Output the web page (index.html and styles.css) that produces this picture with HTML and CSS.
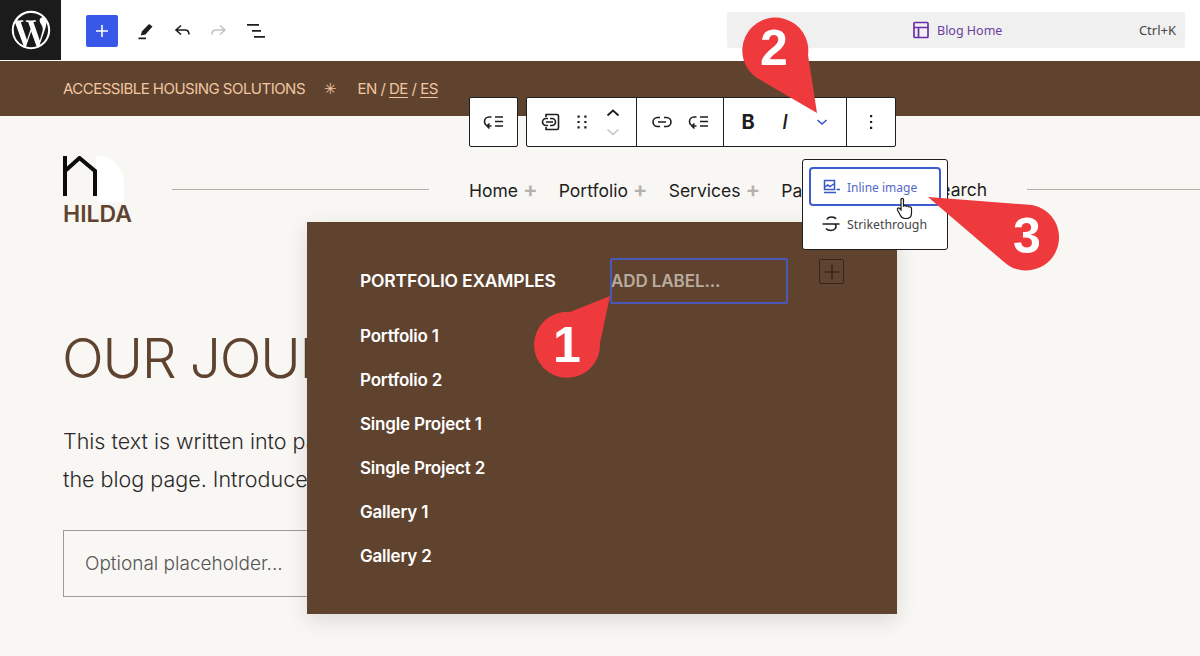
FILE: index.html
```html
<!DOCTYPE html>
<html lang="en">
<head>
  <meta charset="UTF-8">
  <title>Hilda - Block Editor</title>
  <link rel="stylesheet" href="styles.css">
</head>
<body>
  <!-- editor top bar -->
  <header class="topbar">
    <div class="wp-logo">
      <svg width="44" height="44" viewBox="0 0 24 24"><path fill="#fff" d="M12 1.500a10.500 10.500 0 1 0 0 21 10.500 10.500 0 0 0 0-21zM2.600 12c0-1.400.3-2.700.8-3.800l4.500 12.300A9.400 9.400 0 0 1 2.600 12zM12 21.400c-.9 0-1.800-.1-2.700-.4l2.800-8.200 2.900 8c0 .1 0 .1.100.1-1 .3-2 .5-3.100.5zM13.300 7.600c.6 0 1.100-.1 1.100-.1.500 0 .5-.8 0-.8 0 0-1.500.1-2.500.1-.9 0-2.400-.1-2.400-.1-.5 0-.6.800-.1.800 0 0 .5.100 1 .1l1.400 3.900-2 6-3.400-9.900c.6 0 1.100-.1 1.100-.1.500 0 .5-.8 0-.8 0 0-1.500.1-2.500.1h-.6A9.400 9.400 0 0 1 18.400 5.100h-.1c-.9 0-1.600.8-1.600 1.700 0 .8.400 1.400.9 2.200.4.600.8 1.400.8 2.600 0 .8-.3 1.700-.7 3l-.9 3.100zM16.700 20.100l2.900-8.300c.5-1.300.7-2.400.7-3.300 0-.3 0-.6-.1-.9a9.400 9.400 0 0 1-3.500 12.500z"/></svg>
    </div>
    <div class="tools">
      <button class="add-btn">
        <svg width="24" height="24" viewBox="0 0 24 24"><path fill="#fff" d="M11.200 6h1.600v5.200H18v1.600h-5.200V18h-1.600v-5.200H6v-1.600h5.200z"/></svg>
      </button>
      <svg class="tool tool-pen" width="24" height="24" viewBox="0 0 24 24"><path fill="#1e1e1e" d="M16 5l3.500 2.500-7 8-4.800 1 1.300-4.200zM5.500 18.600h7.500v1.700H5.500z"/></svg>
      <svg class="tool" width="24" height="24" viewBox="0 0 24 24"><path fill="none" stroke="#1e1e1e" stroke-width="1.600" d="M11 6.500L6 11l5 4.500M6 11h9c2.500 0 4 1.700 4 4.500"/></svg>
      <svg class="tool" width="24" height="24" viewBox="0 0 24 24"><path fill="none" stroke="#c4c4c4" stroke-width="1.600" d="M13 6.500l5 4.500-5 4.500M18 11H9c-2.500 0-4 1.700-4 4.500"/></svg>
      <svg class="tool" width="24" height="24" viewBox="0 0 24 24"><path fill="#1e1e1e" d="M3 5h12v1.800H3zM8 11h9v1.800H8zM10 17h11v1.800H10z"/></svg>
    </div>
    <div class="command-bar">
      <div class="doc-title">
        <svg width="20" height="20" viewBox="0 0 20 20"><path fill="none" stroke="#6a2fa8" stroke-width="1.700" d="M3 3.500a1 1 0 0 1 1-1h12a1 1 0 0 1 1 1v13a1 1 0 0 1-1 1H4a1 1 0 0 1-1-1zM3 7.500h14M7.500 7.500v10"/></svg>
        <span>Blog Home</span>
      </div>
      <span class="shortcut">Ctrl+K</span>
    </div>
  </header>

  <main class="canvas">
    <div class="announce">
      <span class="tagline">ACCESSIBLE HOUSING SOLUTIONS</span>
      <span class="star">✳</span>
      <span class="langs">EN / <u>DE</u> / <u>ES</u></span>
    </div>

    <div class="site-header">
      <div class="site-logo">
        <svg class="house" width="62" height="46" viewBox="0 0 62 46">
          <path fill="#fff" d="M34 0h7C52 2 62 14 62 28v18H35z"/>
          <path fill="none" stroke="#0c0c0c" stroke-width="4" d="M3 0v40M3 15L17.500 2 33 15v25"/>
        </svg>
        <strong>HILDA</strong>
      </div>
      <span class="rule rule-left"></span>
      <nav class="site-nav">
        <a>Home <i>+</i></a>
        <a>Portfolio <i>+</i></a>
        <a>Services <i>+</i></a>
        <a class="nav-pages">Pages <i>+</i></a>
        <a>Search</a>
      </nav>
      <span class="rule rule-right"></span>
    </div>

    <section class="hero">
      <h1>OUR JOURNAL</h1>
      <p>This text is written into pattern and can be changed on<br>the blog page. Introduce your readers here.</p>
      <div class="search-field">Optional placeholder...</div>
    </section>
  </main>

  <!-- mega menu panel opened from the nav -->
  <div class="mega-menu">
    <div class="mega-head">
      <strong>PORTFOLIO EXAMPLES</strong>
      <span class="label-input">ADD LABEL...</span>
      <span class="mini-add">
        <svg width="20" height="20" viewBox="0 0 24 24"><path fill="#241a12" d="M11.300 3h1.400v8.300H21v1.400h-8.300V21h-1.400v-8.300H3v-1.400h8.300z"/></svg>
      </span>
    </div>
    <ul>
      <li>Portfolio 1</li>
      <li>Portfolio 2</li>
      <li>Single Project 1</li>
      <li>Single Project 2</li>
      <li>Gallery 1</li>
      <li>Gallery 2</li>
    </ul>
  </div>

  <!-- floating block toolbar -->
  <div class="block-toolbar">
    <div class="tb-group tb-single">
      <svg width="24" height="24" viewBox="0 0 24 24"><path fill="none" stroke="#1e1e1e" stroke-width="1.600" d="M9.500 7H7a4.500 4.500 0 0 0 0 9h2.500M7.500 13.500L5 16l2.500 2.500M13 7h8M13 11.500h8M13 16h8"/></svg>
    </div>
    <div class="tb-group tb-main">
      <div class="tb-section tb-move">
        <svg width="24" height="24" viewBox="0 0 24 24"><path fill="none" stroke="#1e1e1e" stroke-width="1.600" d="M7 7V4.500h11a1.500 1.500 0 0 1 1.500 1.500v12a1.500 1.500 0 0 1-1.500 1.500H7V17M9 8.500H7a3.500 3.500 0 0 0 0 7h2M11 8.500h2a3.500 3.500 0 0 1 0 7h-2M7 12h7"/></svg>
        <svg width="24" height="24" viewBox="0 0 24 24"><path fill="#1e1e1e" d="M7.500 5.500h2.200v2.200H7.500zM14.300 5.500h2.200v2.200h-2.200zM7.500 10.900h2.200v2.200H7.500zM14.300 10.900h2.200v2.200h-2.200zM7.500 16.300h2.200v2.200H7.500zM14.300 16.300h2.200v2.200h-2.200z"/></svg>
        <div class="movers">
          <svg width="20" height="16" viewBox="0 0 20 16"><path fill="none" stroke="#1e1e1e" stroke-width="1.800" d="M4.500 10.500L10 5.500l5.500 5"/></svg>
          <svg width="20" height="16" viewBox="0 0 20 16"><path fill="none" stroke="#c4c4c4" stroke-width="1.500" d="M4.500 5.500l5.500 5 5.500-5"/></svg>
        </div>
      </div>
      <div class="tb-section tb-links">
        <svg width="24" height="24" viewBox="0 0 24 24"><path fill="none" stroke="#1e1e1e" stroke-width="1.600" d="M10 7.500H7.500a4.500 4.500 0 0 0 0 9H10M14 7.500h2.500a4.500 4.500 0 0 1 0 9H14M8 12h8"/></svg>
        <svg width="24" height="24" viewBox="0 0 24 24"><path fill="none" stroke="#1e1e1e" stroke-width="1.600" d="M9.500 7H7a4.500 4.500 0 0 0 0 9h2.500M7.500 13.500L5 16l2.500 2.500M13 7h8M13 11.500h8M13 16h8"/></svg>
      </div>
      <div class="tb-section tb-format">
        <span class="fmt-b">B</span>
        <span class="fmt-i">I</span>
        <svg width="24" height="24" viewBox="0 0 24 24"><path fill="none" stroke="#3858c9" stroke-width="1.600" d="M7.500 10l4.500 4 4.500-4"/></svg>
      </div>
      <div class="tb-section tb-more">
        <svg width="24" height="24" viewBox="0 0 24 24"><path fill="#1e1e1e" d="M11 5h2.200v2.200H11zM11 10.900h2.200v2.200H11zM11 16.800h2.200V19H11z"/></svg>
      </div>
    </div>
  </div>

  <!-- format dropdown -->
  <div class="format-menu">
    <div class="format-item format-active">
      <svg width="20" height="20" viewBox="0 0 20 20"><path fill="none" stroke="#3858c9" stroke-width="1.500" d="M2.500 2.500h10v9h-10zM2.500 9.500l3-2.500 2.500 1.500 4.500-3M2 14.500h12M14.500 11.500H18"/></svg>
      <span>Inline image</span>
    </div>
    <div class="format-item">
      <svg width="20" height="20" viewBox="0 0 20 20"><path fill="none" stroke="#1e1e1e" stroke-width="1.500" d="M15 5c-1-2.500-8-3-9 .5M1.500 10h17M14 10c2.500 3 0 6.500-4 6.500-2 0-4-.7-5-2"/></svg>
      <span>Strikethrough</span>
    </div>
  </div>

  <!-- hand cursor -->
  <svg class="cursor" width="18" height="24" viewBox="0 0 18 24"><path fill="#fff" stroke="#1a1a1a" stroke-width="1.200" d="M5 2.500c0-1.500 2.500-1.500 2.500 0V9c1-.8 2.300-.5 2.800.3 1-.6 2.200-.3 2.700.6 1-.4 2.500.2 2.500 1.600v4.500c0 3-1.500 5.500-5 5.500H9c-2 0-3.500-1-4.500-3L1.500 13c-.7-1.500 1-2.700 2.200-1.500L5 13z"/></svg>

  <!-- numbered callout pins -->
  <svg class="callouts" width="1200" height="656" viewBox="0 0 1200 656">
    <path class="pin" d="M610 296L570 312A33 33 0 1 0 600 343z"/>
    <path class="pin" d="M817 113L757 78A33 33 0 1 1 808 55z"/>
    <path class="pin" d="M928 197L1032 205A33 33 0 1 1 1004 262z"/>
    <text x="567" y="362">1</text>
    <text x="774" y="65">2</text>
    <text x="1027" y="253">3</text>
  </svg>
</body>
</html>
```

FILE: styles.css
```css
* {
  box-sizing: border-box;
}

html, body {
  height: 656px;
  overflow: hidden;
}

body {
  margin: 0;
  position: relative;
  background-color: #f9f7f4;
  font-family: Inter, "Liberation Sans", sans-serif;
  color: #5f432f;
}

.topbar {
  height: 61px;
  background-color: #fff;
  display: flex;
  align-items: center;
}

.wp-logo {
  width: 61px;
  height: 60px;
  background-color: #1b1b1b;
  display: flex;
  align-items: center;
  justify-content: center;
  align-self: flex-start;
}

.tools {
  display: flex;
  align-items: center;
  margin-left: 25px;
}

.add-btn {
  width: 32px;
  height: 32px;
  padding: 0;
  border: none;
  border-radius: 2px;
  background-color: #3858e9;
  display: flex;
  align-items: center;
  justify-content: center;
}

.tool {
  margin-left: 13px;
}

.tool-pen {
  margin-left: 15px;
}

.command-bar {
  width: 458px;
  height: 36px;
  margin-left: auto;
  margin-right: 15px;
  margin-top: -1px;
  padding: 0 9px 0 11px;
  background-color: #f0f0f0;
  border-radius: 3px;
  display: flex;
  align-items: center;
  justify-content: space-between;
}

.doc-title {
  margin-left: 173px;
  display: flex;
  align-items: center;
  gap: 6px;
  font-family: "Noto Sans", sans-serif;
  font-size: 12.5px;
  color: #6a3ea1;
}

.shortcut {
  font-family: "Noto Sans", sans-serif;
  font-size: 13px;
  color: #444;
}

.announce {
  height: 55px;
  background-color: #5f432f;
  padding-left: 63px;
  display: flex;
  align-items: center;
  color: #f2c6a0;
  font-size: 15px;
  letter-spacing: -0.52px;
}

.star {
  margin-left: 19px;
  font-size: 15px;
}

.langs {
  margin-left: 21px;
}

.langs u {
  text-underline-offset: 3px;
}

.site-header {
  height: 120px;
  display: flex;
  align-items: flex-start;
  padding-top: 40px;
  padding-left: 62px;
}

.site-logo {
  width: 110px;
  display: flex;
  flex-direction: column;
}

.house {
  display: block;
}

.site-logo strong {
  font-size: 23px;
  font-weight: 600;
  line-height: 24px;
  padding-left: 1px;
  white-space: nowrap;
}

.rule {
  height: 1px;
  background-color: #b5b1aa;
  margin-top: 33px;
}

.rule-left {
  width: 257px;
}

.rule-right {
  flex: 1;
}

.site-nav {
  display: flex;
  gap: 21px;
  margin: 22px 40px 0;
  font-size: 17.5px;
  line-height: 24px;
  color: #1e1e1e;
  white-space: nowrap;
}

.site-nav i {
  font-style: normal;
  font-size: 22px;
  font-weight: 600;
  line-height: 22px;
  color: #b5b1aa;
}

/* the rest of this item sits behind the format dropdown */
.nav-pages {
  margin-right: 56px;
}

.hero {
  padding-left: 63px;
}

.hero h1 {
  margin: 88px 0 0 -1px;
  font-size: 55px;
  font-weight: 300;
  line-height: 68px;
  letter-spacing: -1.2px;
}

.hero p {
  margin: 30px 0 0;
  font-size: 21.5px;
  font-weight: 300;
  line-height: 38px;
  color: #2a2a2a;
  white-space: nowrap;
}

.search-field {
  width: 300px;
  height: 67px;
  margin-top: 32px;
  padding-left: 21px;
  border: 1px solid #9a9a96;
  display: flex;
  align-items: center;
  font-size: 19px;
  font-weight: 300;
  color: #555;
}

.mega-menu {
  position: absolute;
  left: 307px;
  top: 222px;
  width: 590px;
  height: 392px;
  padding: 36px 40px 36px 53px;
  background-color: #5f432f;
  box-shadow: 0 6px 20px rgba(0, 0, 0, 0.12);
  color: #fff;
}

.mega-head {
  display: flex;
  align-items: flex-start;
}

.mega-head strong {
  width: 250px;
  margin-top: 12px;
  font-size: 17.5px;
  font-weight: 600;
  letter-spacing: -0.2px;
  white-space: nowrap;
}

.label-input {
  width: 178px;
  height: 46px;
  border: 2px solid #4a58b8;
  border-radius: 2px;
  text-indent: -1px;
  display: flex;
  align-items: center;
  font-size: 17px;
  font-weight: 600;
  color: #b9ab9f;
  letter-spacing: -0.1px;
}

.mini-add {
  width: 25px;
  height: 25px;
  margin: 1px 0 0 31px;
  border: 1px solid #33241a;
  border-radius: 2px;
  display: flex;
  align-items: center;
  justify-content: center;
}

.mega-menu ul {
  list-style: none;
  margin: 20px 0 0;
  padding: 0;
  display: flex;
  flex-direction: column;
  gap: 20px;
}

.mega-menu li {
  font-size: 17px;
  font-weight: 600;
  line-height: 24px;
  letter-spacing: -0.2px;
}

.block-toolbar {
  position: absolute;
  left: 469px;
  top: 97px;
  display: flex;
  gap: 8px;
}

.tb-group {
  height: 50px;
  background-color: #fff;
  border: 1px solid #1e1e1e;
  border-radius: 2px;
  display: flex;
}

.tb-single {
  width: 49px;
  align-items: center;
  justify-content: center;
}

.tb-section {
  display: flex;
  align-items: center;
  justify-content: center;
  border-left: 1px solid #1e1e1e;
}

.tb-section:first-child {
  border-left: none;
}

.tb-move {
  width: 109px;
  gap: 7px;
}

.movers {
  display: flex;
  flex-direction: column;
  width: 24px;
  align-items: center;
  gap: 3px;
}

.tb-links {
  width: 87px;
  gap: 13px;
}

.tb-format {
  width: 123px;
  gap: 13px;
}

.fmt-b,
.fmt-i {
  width: 24px;
  text-align: center;
  font-size: 20px;
  color: #1e1e1e;
}

.fmt-b {
  font-weight: 700;
}

.fmt-i {
  font-style: italic;
  font-weight: 500;
}

.tb-more {
  width: 49px;
}

.format-menu {
  position: absolute;
  left: 802px;
  top: 159px;
  width: 146px;
  height: 91px;
  padding: 7px 6px;
  background-color: #fff;
  border: 1px solid #1e1e1e;
  border-radius: 3px;
  font-family: "Noto Sans", sans-serif;
  font-size: 12.3px;
  color: #444;
}

.format-item {
  height: 36px;
  padding-left: 12px;
  display: flex;
  align-items: center;
  gap: 6px;
}

.format-active {
  height: 39px;
  border: 2px solid #3f5ccf;
  border-radius: 4px;
  padding-left: 11px;
  padding-top: 2px;
  gap: 5px;
  font-size: 12px;
  color: #5368c8;
}

.cursor {
  position: absolute;
  left: 896px;
  top: 197px;
}

.callouts {
  position: absolute;
  left: 0;
  top: 0;
  pointer-events: none;
}

.pin {
  fill: #ee3a3c;
}

.callouts text {
  fill: #fff;
  font-family: "Liberation Sans", sans-serif;
  font-size: 50px;
  font-weight: 700;
  text-anchor: middle;
}
```
